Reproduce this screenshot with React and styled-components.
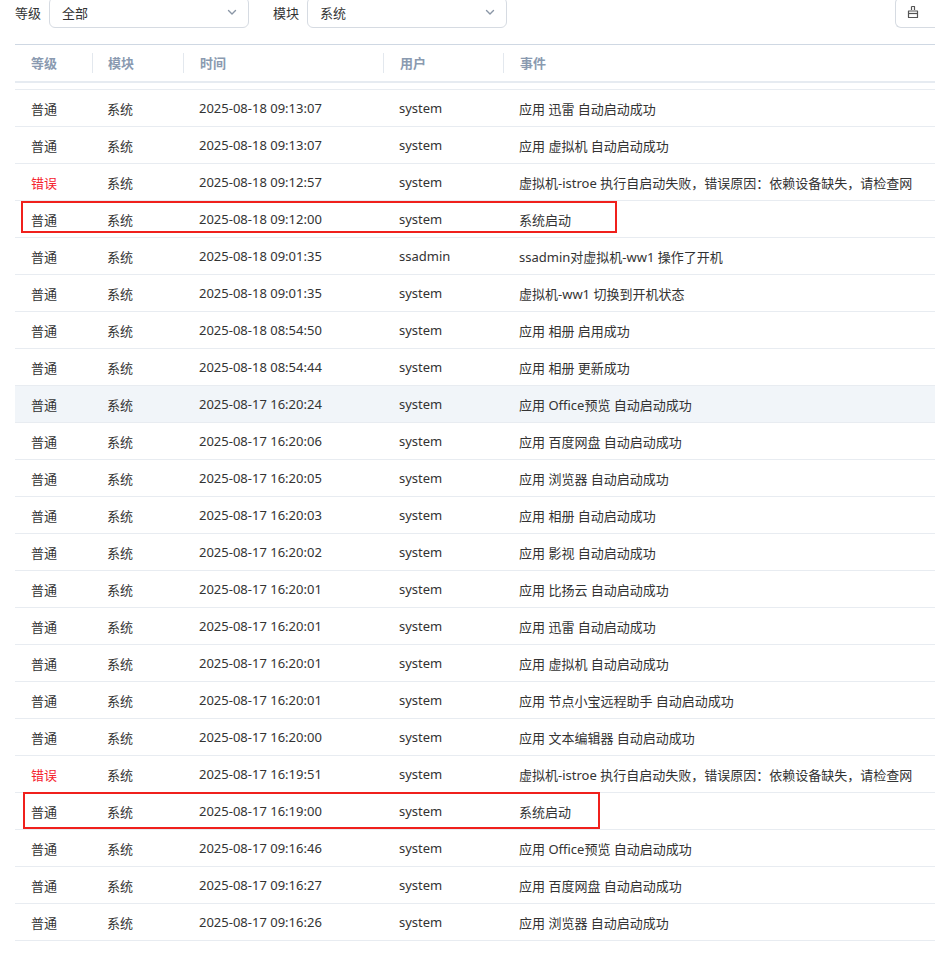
import React from "react";
import styled, { createGlobalStyle } from "styled-components";

const Global = createGlobalStyle`
  html, body { margin: 0; padding: 0; background: #fff; overflow: hidden; }
  body { font-family: "Noto Sans", "Noto Sans CJK SC", sans-serif; font-size: 13px; color: #333; }
`;

const Page = styled.div`
  width: 935px; height: 957px; overflow: hidden; position: relative;
`;
const Filters = styled.div`
  display: flex; align-items: center; height: 32px; margin-top: -4px; padding-left: 15px; gap: 8px;
`;
const Label = styled.span`font-size: 13px; color: #333;`;
const Select = styled.div`
  width: ${p => p.w}px; height: 31px; border: 1px solid #d6dbe2; border-radius: 6px;
  display: flex; align-items: center; justify-content: space-between; padding: 0 10px 0 12px;
  box-sizing: border-box; margin-right: ${p => p.mr || 0}px; color: #333;
`;
const Spacer = styled.div`flex: 1;`;
const IconBtn = styled.div`
  width: 40px; height: 31px; border: 1px solid #d6dbe2; border-radius: 6px 0 0 6px; border-right: none;
  display: flex; align-items: center; justify-content: center; box-sizing: border-box; padding-right: 6px;
`;
const Table = styled.div`
  margin: 16px 0 0 15px; border-top: 1px solid #cfd8e3;
`;
const Head = styled.div`
  display: grid; grid-template-columns: 77px 91px 200px 120px 1fr; height: 36px; align-items: center;
  border-bottom: 2px solid #e6ebf1;
`;
const HCell = styled.div`
  color: #8a9ab0; font-weight: 600; font-size: 13px; padding-left: ${p => p.pl || 16}px;
  border-left: ${p => (p.first ? "none" : "1px solid #e3e8ee")}; line-height: 20px;
`;
const Gap = styled.div`height: 6px; border-bottom: 1px solid #e8ecf1;`;
const Row = styled.div`
  position: relative; display: grid; grid-template-columns: 76px 92px 200px 120px 1fr;
  height: 36px; align-items: center; border-bottom: 1px solid #e8ecf1; white-space: nowrap;
  background: ${p => (p.hover ? "#f1f5f9" : "#fff")};
`;
const Cell = styled.div`
  padding-left: 16px; overflow: hidden; color: ${p => (p.err ? "#f5222d" : "#333")};
`;
const Mark = styled.div`
  position: absolute; top: 0; height: 32px; border: 2px solid #f0201c; box-sizing: border-box; pointer-events: none;
`;

const raw = [
  ["普通","2025-08-18 09:13:07","system","应用 迅雷 自动启动成功"],
  ["普通","2025-08-18 09:13:07","system","应用 虚拟机 自动启动成功"],
  ["错误","2025-08-18 09:12:57","system","虚拟机-istroe 执行自启动失败，错误原因：依赖设备缺失，请检查网"],
  ["普通","2025-08-18 09:12:00","system","系统启动",{l:6,w:596,t:0}],
  ["普通","2025-08-18 09:01:35","ssadmin","ssadmin对虚拟机-ww1 操作了开机"],
  ["普通","2025-08-18 09:01:35","system","虚拟机-ww1 切换到开机状态"],
  ["普通","2025-08-18 08:54:50","system","应用 相册 启用成功"],
  ["普通","2025-08-18 08:54:44","system","应用 相册 更新成功"],
  ["普通","2025-08-17 16:20:24","system","应用 Office预览 自动启动成功",null,true],
  ["普通","2025-08-17 16:20:06","system","应用 百度网盘 自动启动成功"],
  ["普通","2025-08-17 16:20:05","system","应用 浏览器 自动启动成功"],
  ["普通","2025-08-17 16:20:03","system","应用 相册 自动启动成功"],
  ["普通","2025-08-17 16:20:02","system","应用 影视 自动启动成功"],
  ["普通","2025-08-17 16:20:01","system","应用 比扬云 自动启动成功"],
  ["普通","2025-08-17 16:20:01","system","应用 迅雷 自动启动成功"],
  ["普通","2025-08-17 16:20:01","system","应用 虚拟机 自动启动成功"],
  ["普通","2025-08-17 16:20:01","system","应用 节点小宝远程助手 自动启动成功"],
  ["普通","2025-08-17 16:20:00","system","应用 文本编辑器 自动启动成功"],
  ["错误","2025-08-17 16:19:51","system","虚拟机-istroe 执行自启动失败，错误原因：依赖设备缺失，请检查网"],
  ["普通","2025-08-17 16:19:00","system","系统启动",{l:8,w:577,t:-1,h:37}],
  ["普通","2025-08-17 09:16:46","system","应用 Office预览 自动启动成功"],
  ["普通","2025-08-17 09:16:27","system","应用 百度网盘 自动启动成功"],
  ["普通","2025-08-17 09:16:26","system","应用 浏览器 自动启动成功"],
];

const Chevron = () => (
  <svg width="12" height="12" viewBox="0 0 12 12"><path d="M2.5 4.5 6 8l3.5-3.5" fill="none" stroke="#8a96a6" strokeWidth="1.4" strokeLinecap="round" strokeLinejoin="round"/></svg>
);
const Brush = () => (
  <svg width="14" height="14" viewBox="0 0 14 14" fill="none" stroke="#555" strokeWidth="1.2" strokeLinejoin="round">
    <path d="M5.5 1.5h3v3.5"/><path d="M5.5 1.5v3.5"/><path d="M2.5 6h9v6.5h-9z"/><path d="M2.5 8.5h9"/>
  </svg>
);

export default function App() {
  return (
    <Page>
      <Global />
      <Filters>
        <Label>等级</Label>
        <Select w={200} mr={16}>全部<Chevron /></Select>
        <Label>模块</Label>
        <Select w={200}>系统<Chevron /></Select>
        <Spacer />
        <IconBtn><Brush /></IconBtn>
      </Filters>
      <Table>
        <Head>
          <HCell first>等级</HCell><HCell pl={15}>模块</HCell><HCell>时间</HCell><HCell>用户</HCell><HCell>事件</HCell>
        </Head>
        <Gap />
        {raw.map((r, i) => (
          <Row key={i} hover={r[5]}>
            <Cell err={r[0] === "错误"}>{r[0]}</Cell>
            <Cell>系统</Cell>
            <Cell>{r[1]}</Cell>
            <Cell>{r[2]}</Cell>
            <Cell>{r[3]}</Cell>
            {r[4] && <Mark style={{ left: r[4].l, width: r[4].w, top: r[4].t, height: r[4].h || 32 }} />}
          </Row>
        ))}
      </Table>
    </Page>
  );
}
